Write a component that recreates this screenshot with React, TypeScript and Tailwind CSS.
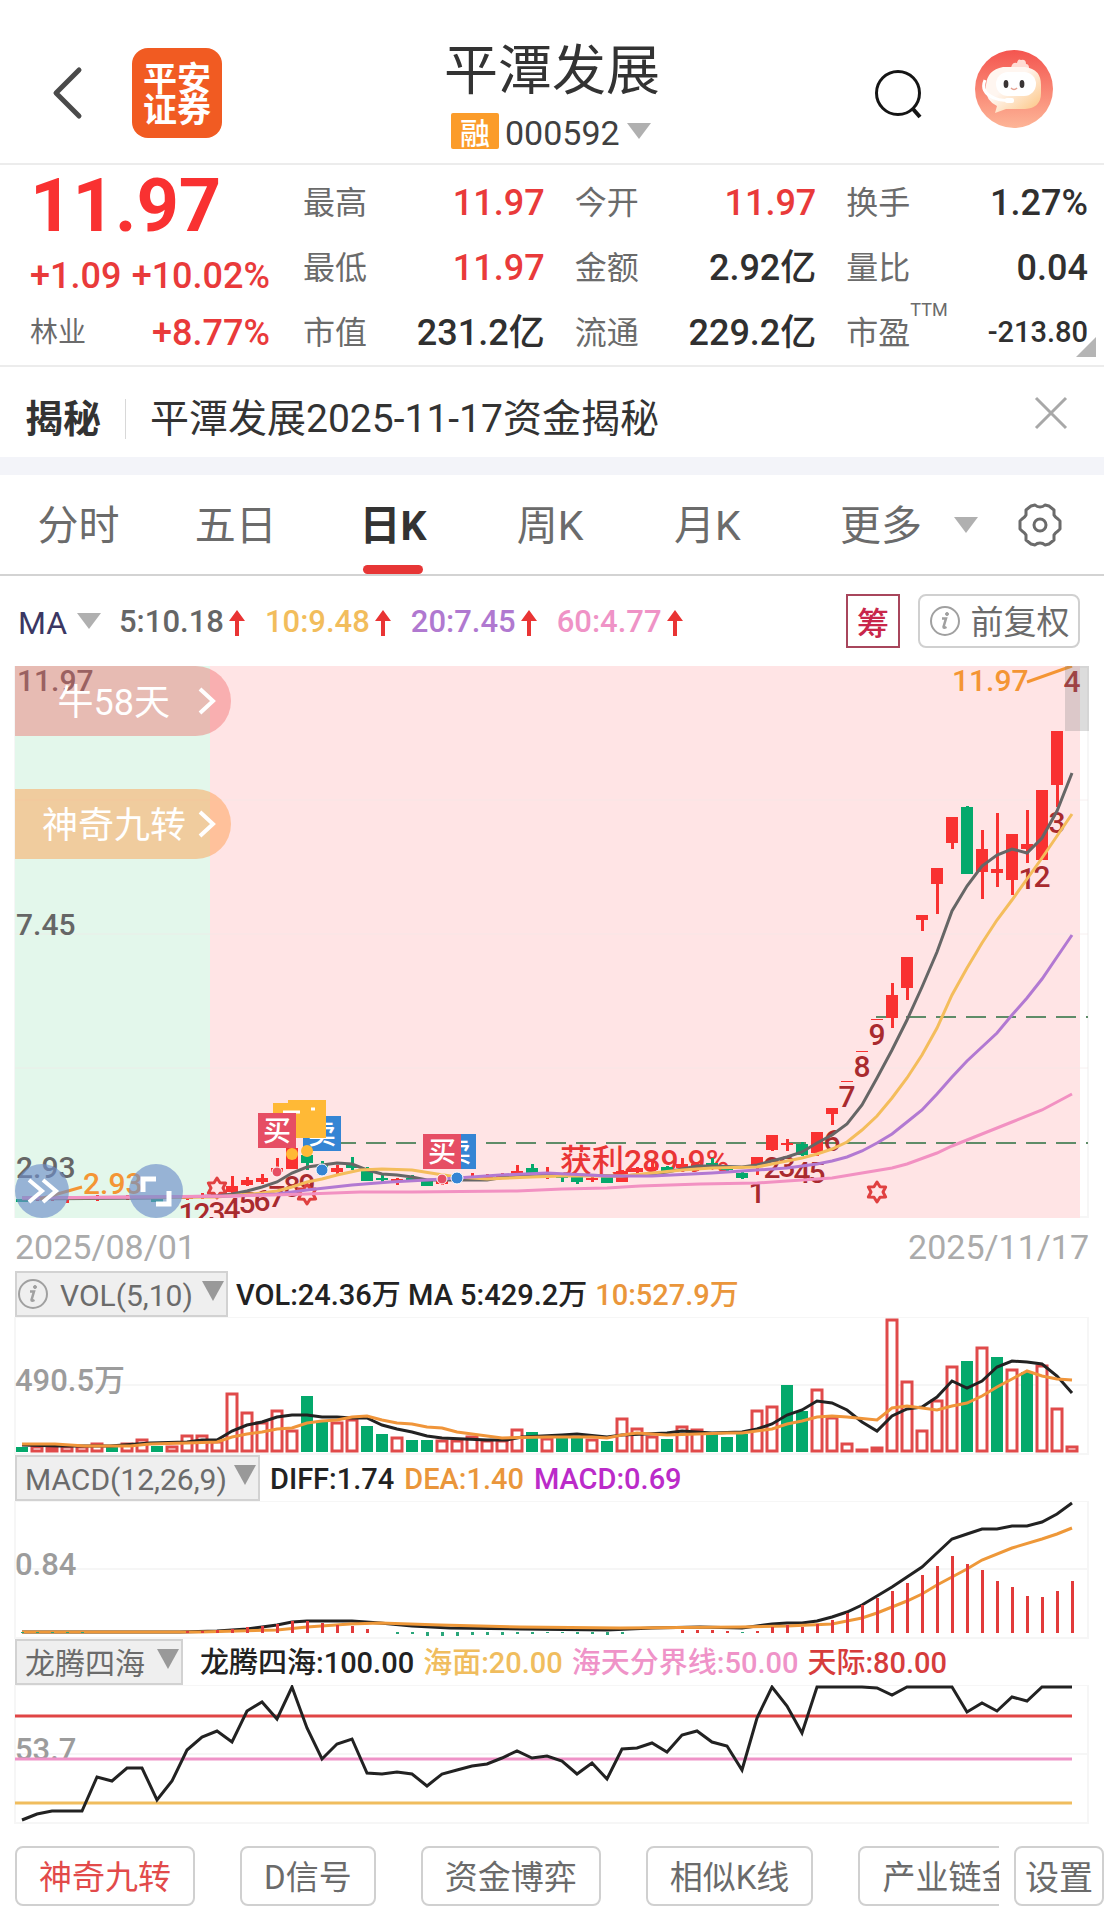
import { useState } from 'react';

const FIRST_X = 22;
const STEP = 15;
const RED = '#f93131';
const GREEN = '#04a96c';

const xAt = (i: number) => FIRST_X + i * STEP;

// [index, body top, body bottom, wick top, wick bottom, colour]
type Candle = [number, number, number, number, number, 'r' | 'g'];

const candles: Candle[] = [
  [0, 1199, 1202, 1199, 1202, 'g'],
  [1, 1197, 1200, 1196, 1201, 'r'],
  [2, 1198, 1200, 1196, 1201, 'r'],
  [3, 1197, 1200, 1196, 1203, 'r'],
  [5, 1197, 1199, 1195, 1201, 'r'],
  [7, 1197, 1199, 1195, 1200, 'r'],
  [9, 1199, 1202, 1198, 1202, 'g'],
  [11, 1197, 1199, 1195, 1200, 'r'],
  [12, 1195, 1198, 1193, 1199, 'r'],
  [13, 1192, 1197, 1188, 1198, 'r'],
  [14, 1186, 1192, 1176, 1193, 'r'],
  [15, 1180, 1185, 1177, 1186, 'r'],
  [16, 1178, 1182, 1174, 1184, 'r'],
  [17, 1168, 1172, 1158, 1176, 'r'],
  [18, 1148, 1169, 1148, 1169, 'r'],
  [19, 1155, 1163, 1150, 1170, 'g'],
  [20, 1165, 1172, 1161, 1174, 'g'],
  [21, 1168, 1172, 1165, 1174, 'r'],
  [22, 1165, 1168, 1157, 1170, 'g'],
  [23, 1168, 1181, 1167, 1181, 'g'],
  [24, 1178, 1180, 1175, 1183, 'g'],
  [25, 1179, 1181, 1178, 1185, 'r'],
  [26, 1178, 1180, 1175, 1181, 'g'],
  [27, 1181, 1186, 1180, 1186, 'g'],
  [28, 1181, 1184, 1178, 1185, 'r'],
  [29, 1177, 1180, 1174, 1182, 'g'],
  [30, 1177, 1179, 1173, 1181, 'r'],
  [31, 1176, 1178, 1174, 1180, 'r'],
  [32, 1174, 1177, 1173, 1178, 'r'],
  [33, 1171, 1174, 1165, 1175, 'r'],
  [34, 1168, 1173, 1164, 1174, 'g'],
  [35, 1173, 1175, 1167, 1179, 'r'],
  [36, 1176, 1178, 1174, 1182, 'g'],
  [37, 1177, 1182, 1175, 1184, 'g'],
  [38, 1178, 1180, 1176, 1182, 'r'],
  [39, 1177, 1183, 1176, 1183, 'g'],
  [40, 1171, 1182, 1170, 1182, 'r'],
  [41, 1168, 1172, 1167, 1176, 'r'],
  [42, 1167, 1170, 1161, 1171, 'r'],
  [43, 1167, 1172, 1166, 1172, 'g'],
  [44, 1164, 1168, 1158, 1169, 'r'],
  [45, 1164, 1170, 1162, 1171, 'r'],
  [46, 1163, 1167, 1158, 1168, 'g'],
  [47, 1167, 1170, 1166, 1172, 'g'],
  [48, 1173, 1178, 1172, 1179, 'g'],
  [49, 1157, 1165, 1157, 1175, 'r'],
  [50, 1135, 1150, 1135, 1151, 'r'],
  [51, 1143, 1145, 1139, 1151, 'r'],
  [52, 1144, 1155, 1142, 1156, 'g'],
  [53, 1132, 1153, 1132, 1156, 'r'],
  [54, 1108, 1114, 1108, 1125, 'r'],
  [55, 1081, 1082, 1081, 1082, 'r'],
  [56, 1051, 1052, 1051, 1052, 'r'],
  [57, 1019, 1020, 1019, 1020, 'r'],
  [58, 995, 1018, 983, 1028, 'r'],
  [59, 957, 988, 957, 1000, 'r'],
  [60, 915, 920, 915, 931, 'r'],
  [61, 868, 884, 868, 914, 'r'],
  [62, 817, 843, 817, 849, 'r'],
  [63, 807, 874, 806, 874, 'g'],
  [64, 849, 872, 830, 899, 'r'],
  [65, 869, 873, 813, 887, 'r'],
  [66, 834, 880, 834, 895, 'r'],
  [67, 844, 849, 810, 863, 'r'],
  [68, 790, 860, 790, 860, 'r'],
  [69, 731, 785, 731, 807, 'r'],
];

const priceLines = [
  {
    color: '#666666',
    points:
      '22,1199 150,1198 217,1196 232,1194 247,1191 262,1187 277,1182 292,1173 307,1167 322,1165 337,1163 352,1164 367,1170 382,1174 397,1175 412,1177 427,1180 457,1180 487,1180 517,1175 540,1174 577,1175 622,1176 652,1174 667,1172 682,1169 697,1166 712,1166 742,1167 757,1165 772,1161 787,1157 802,1152 817,1143 832,1135 847,1124 862,1105 877,1078 892,1050 907,1020 922,987 937,952 952,911 967,886 982,866 997,855 1012,849 1027,853 1042,838 1057,811 1072,773',
  },
  {
    color: '#f4bd5c',
    points:
      '22,1198 217,1197 262,1193 277,1191 292,1187 307,1182 322,1179 337,1175 360,1170 382,1169 412,1170 437,1174 457,1177 487,1179 532,1177 562,1176 622,1176 652,1173 682,1170 712,1168 757,1167 772,1164 787,1161 802,1158 817,1154 832,1149 847,1142 862,1130 877,1116 892,1098 907,1078 922,1055 937,1028 952,995 967,968 982,943 997,920 1012,900 1027,879 1042,858 1057,836 1072,814',
  },
  {
    color: '#b279d2',
    points:
      '22,1198 150,1197 232,1196 277,1194 307,1190 352,1185 390,1182 427,1180 457,1178 500,1175 547,1173 607,1176 652,1176 712,1173 757,1170 787,1168 802,1166 817,1164 832,1161 847,1157 862,1151 877,1143 892,1134 907,1122 922,1110 937,1094 952,1077 967,1061 982,1047 997,1033 1012,1015 1027,998 1042,979 1057,957 1072,935',
  },
  {
    color: '#f291c2',
    points:
      '22,1198 232,1196 307,1194 360,1192 412,1192 517,1191 562,1189 607,1188 640,1186 700,1184 757,1183 787,1181 832,1178 862,1173 892,1168 907,1164 937,1153 952,1146 982,1134 1012,1122 1042,1110 1057,1102 1072,1094',
  },
];

// [digit, x, baseline]
const counts: [string, number, number][] = [
  ['1', 187, 1224], ['2', 202, 1224], ['3', 217, 1223], ['4', 232, 1219], ['5', 247, 1213],
  ['6', 262, 1211], ['7', 277, 1207], ['8', 292, 1197], ['9', 307, 1195],
  ['1', 757, 1203], ['2', 772, 1178], ['3', 787, 1177], ['4', 802, 1183], ['5', 817, 1183],
  ['6', 832, 1151], ['7', 847, 1107], ['8', 862, 1077], ['9', 877, 1045],
  ['1', 1027, 889], ['2', 1042, 887], ['3', 1057, 833], ['4', 1072, 692],
];

const volumeTops = [
  1447, 1446, 1447, 1446, 1446, 1443, 1447, 1443, 1439, 1446, 1446, 1435, 1435, 1441, 1393, 1412, 1422, 1410, 1430,
  1396, 1422, 1422, 1419, 1426, 1434, 1437, 1440, 1440, 1440, 1440, 1436, 1440, 1440, 1429, 1432, 1438, 1438, 1438,
  1439, 1441, 1418, 1428, 1436, 1439, 1426, 1429, 1434, 1437, 1434, 1410, 1406, 1385, 1411, 1389, 1417, 1443, 1449,
  1447, 1319, 1381, 1430, 1400, 1366, 1361, 1347, 1357, 1369, 1372, 1365, 1408, 1446,
];
const fallingDays = new Set([0, 6, 9, 19, 20, 23, 24, 26, 27, 34, 36, 37, 39, 43, 46, 47, 48, 51, 52, 63, 65, 67]);

const macdTops: Record<number, number> = {
  11: 1631, 12: 1631, 13: 1630, 14: 1629, 15: 1627, 16: 1626, 17: 1624, 18: 1621, 19: 1621, 20: 1623, 21: 1625,
  22: 1626, 23: 1629, 44: 1630, 45: 1630, 46: 1630, 47: 1631, 49: 1631, 50: 1627, 51: 1625, 52: 1627, 53: 1624,
  54: 1620, 55: 1613, 56: 1605, 57: 1598, 58: 1591, 59: 1583, 60: 1575, 61: 1566, 62: 1556, 63: 1564, 64: 1570,
  65: 1581, 66: 1587, 67: 1596, 68: 1597, 69: 1591, 70: 1581,
};
const macdBottoms: Record<number, number> = {
  0: 1633, 1: 1633, 2: 1633, 3: 1633, 4: 1633, 25: 1634, 26: 1634, 27: 1636, 28: 1636, 29: 1636, 30: 1635, 31: 1635,
  32: 1635, 33: 1634, 34: 1634, 35: 1633, 36: 1633, 37: 1634, 38: 1634, 39: 1635, 40: 1634, 48: 1633,
};

const seaLine = [
  1820, 1814, 1811, 1811, 1811, 1777, 1781, 1768, 1768, 1800, 1781, 1750, 1737, 1731, 1742, 1711, 1702, 1719, 1687,
  1728, 1759, 1744, 1739, 1773, 1774, 1772, 1774, 1786, 1774, 1770, 1766, 1764, 1758, 1751, 1758, 1756, 1761, 1774,
  1763, 1779, 1749, 1748, 1743, 1752, 1735, 1731, 1742, 1746, 1770, 1718, 1687, 1706, 1733, 1687, 1687, 1687, 1687,
  1688, 1695, 1687, 1687, 1687, 1687, 1712, 1703, 1711, 1697, 1701, 1687, 1687, 1687,
];

function Triangle({ className = '' }: { className?: string }) {
  return (
    <svg viewBox="0 0 24 16" className={`pointer-events-none h-4 w-6 shrink-0 ${className}`} aria-hidden="true">
      <path d="M0 0H24L12 16Z" fill="#b0b0b0" />
    </svg>
  );
}

function InfoIcon() {
  return (
    <svg viewBox="0 0 32 32" className="h-8 w-8 shrink-0" fill="none" stroke="#a0a0a0" aria-hidden="true">
      <circle cx="16" cy="16" r="14" strokeWidth="2" />
      <path d="M13 13.5h4l-2.5 8.5q0 1.5 3 0" strokeWidth="2.5" />
      <circle cx="18" cy="9" r="1.5" fill="#a0a0a0" />
    </svg>
  );
}

function IndicatorSelect({ name, className, info = false }: { name: string; className: string; info?: boolean }) {
  return (
    <label className="relative flex h-[46px] items-center border-2 border-[#d2d2d2] bg-[#efefef] font-normal">
      {info && (
        <span className="absolute left-0">
          <InfoIcon />
        </span>
      )}
      <select aria-label="指标" className={`h-full appearance-none text-[30px] text-[#6b6b6b] outline-none ${className}`}>
        <option>{name}</option>
      </select>
      <svg viewBox="0 0 22 20" className="pointer-events-none absolute top-2 right-[2px] h-5 w-[22px]" aria-hidden="true">
        <path d="M0 0H22L11 20Z" fill="#999" />
      </svg>
    </label>
  );
}

function Star({ x, y }: { x: number; y: number }) {
  const pts = Array.from({ length: 12 }, (_, k) => {
    const r = k % 2 ? 6 : 10;
    const a = (k * Math.PI) / 6 - Math.PI / 2;
    return `${x + r * Math.cos(a)},${y + r * Math.sin(a)}`;
  });
  return <polygon points={pts.join(' ')} fill="#ffe4e5" stroke="#e04040" strokeWidth="3" strokeLinejoin="round" />;
}

function Tag({ x, y, text, fill }: { x: number; y: number; text: string; fill: string }) {
  return (
    <g>
      <rect x={x} y={y} width="38" height="35" fill={fill} />
      <text x={x + 19} y={y + 28} textAnchor="middle" fontSize="28" fontWeight="500" fill="#fff">
        {text}
      </text>
    </g>
  );
}

function Frame({ top, bottom, lines }: { top: number; bottom: number; lines: number[] }) {
  return (
    <g stroke="#f6f6f6" strokeWidth="2" fill="none">
      <rect x="15" y={top} width="1073" height={bottom - top} />
      {lines.map((y) => (
        <path key={y} d={`M15 ${y}H1088`} />
      ))}
    </g>
  );
}

function PriceChart() {
  return (
    <svg viewBox="0 666 1104 552" className="block w-full">
      <Frame top={667} bottom={1217} lines={[]} />
      <rect x="15" y="666" width="195" height="552" fill="#e3f7eb" />
      <rect x="210" y="666" width="870" height="552" fill="#ffe4e5" />
      <path d="M15 800H1088M15 934H1088M15 1068H1088" stroke="#f3e8e8" opacity="0.6" />

      <g fontSize="30" fontWeight="500" fill="#666">
        <text x="17" y="691">11.97</text>
        <text x="16" y="935">7.45</text>
        <text x="16" y="1178">2.93</text>
      </g>
      <g stroke="#5f8c68" strokeWidth="2" strokeDasharray="20 10">
        <path d="M336 1143H1088" />
        <path d="M876 1017H1088" />
      </g>

      <text x="560" y="1172" fontSize="32" fontWeight="500" fill="#e93535">
        获利289.9%
      </text>

      <g fontSize="30" fontWeight="500" fill="#a92a2e" textAnchor="middle">
        {counts.map(([n, x, y]) => (
          <text key={`${x}-${y}`} x={x} y={y}>
            {n}
          </text>
        ))}
      </g>
      {candles.map(([i, top, bottom, high, low, c]) => (
        <g key={i} fill={c === 'r' ? RED : GREEN}>
          <rect x={xAt(i) - 6} y={top} width="12" height={bottom - top} />
          <rect x={xAt(i) - 1} y={high} width="3" height={low - high} />
        </g>
      ))}
      <Star x={217} y={1188} />
      <Star x={307} y={1194} />
      <Star x={877} y={1192} />
      {priceLines.map((line) => (
        <polyline key={line.color} points={line.points} fill="none" stroke={line.color} strokeWidth="3" />
      ))}

      {/* high and low callouts */}
      <g fill="#f49534" stroke="none" fontSize="30" fontWeight="500">
        <text x="952" y="691">11.97</text>
        <text x="83" y="1194">2.93</text>
      </g>
      <path d="M1027 682L1072 666M82 1187L40 1199" stroke="#f49534" strokeWidth="3" />
      <rect x="1065" y="666" width="24" height="65" fill="#808080" opacity="0.28" />

      {/* trade marks */}
      <rect x="273" y="1103" width="38" height="35" fill="#ffb936" />
      <Tag x={303} y={1116} text="卖" fill="#3585d4" />
      <rect x="288" y="1100" width="38" height="38" fill="#ffb936" />
      <path d="M283 1112H300M311 1109H315" stroke="#fff" strokeWidth="3" />
      <Tag x={258} y={1113} text="买" fill="#e64e64" />
      <Tag x={438} y={1134} text="卖" fill="#3585d4" />
      <Tag x={423} y={1134} text="买" fill="#e64e64" />
      <g stroke="#fff" strokeWidth="1">
        <circle cx="277" cy="1172" r="5" fill="#e64e64" />
        <circle cx="322" cy="1170" r="6" fill="#3585d4" />
        <circle cx="442" cy="1179" r="5" fill="#e64e64" />
        <circle cx="457" cy="1178" r="6" fill="#3585d4" />
      </g>
      <circle cx="292" cy="1154" r="6" fill="#ffb936" />
      <circle cx="307" cy="1151" r="6" fill="#ffb936" />
    </svg>
  );
}

function VolumeChart() {
  return (
    <svg viewBox="0 1317 1104 138" className="block w-full">
      <Frame top={1317} bottom={1454} lines={[1385]} />
      <text x="15" y="1391" fontSize="31" fontWeight="500" fill="#9c9c9c">
        490.5万
      </text>
      {volumeTops.map((top, i) =>
        fallingDays.has(i) ? (
          <rect key={i} x={xAt(i) - 6} y={top} width="12" height={1452 - top} fill={GREEN} />
        ) : (
          <rect
            key={i}
            x={xAt(i) - 5}
            y={top + 1}
            width="10"
            height={Math.max(1450 - top, 1)}
            fill="#fff"
            stroke="#e04a4a"
            strokeWidth="3"
          />
        ),
      )}
      <polyline
        fill="none"
        stroke="#222"
        strokeWidth="3"
        points="22,1445 60,1446 110,1446 150,1443 187,1442 202,1440 217,1440 232,1431 247,1425 262,1422 277,1417 292,1415 307,1415 322,1417 337,1417 352,1418 367,1418 382,1425 397,1429 412,1432 427,1436 442,1438 487,1440 507,1440 522,1437 562,1435 577,1434 607,1437 622,1435 667,1433 682,1431 712,1433 742,1432 757,1429 772,1424 787,1415 802,1410 817,1401 832,1403 847,1410 862,1422 877,1431 892,1416 907,1409 922,1407 937,1397 952,1381 967,1388 982,1381 997,1367 1012,1361 1027,1362 1042,1364 1057,1376 1072,1393"
      />
      <polyline
        fill="none"
        stroke="#f0953a"
        strokeWidth="3"
        points="22,1444 55,1444 85,1446 130,1446 150,1444 187,1443 217,1442 232,1437 247,1434 262,1432 277,1429 292,1428 307,1423 322,1421 337,1420 352,1417 367,1416 382,1420 397,1423 412,1424 427,1427 442,1428 457,1432 472,1434 502,1438 547,1437 592,1437 607,1438 622,1435 637,1433 667,1435 727,1433 742,1433 772,1429 787,1424 802,1421 817,1417 832,1416 847,1417 877,1420 892,1408 907,1406 922,1408 937,1410 952,1406 967,1403 982,1396 997,1387 1012,1379 1027,1371 1042,1376 1057,1379 1072,1380"
      />
    </svg>
  );
}

function MacdChart() {
  return (
    <svg viewBox="0 1501 1104 138" className="block w-full">
      <Frame top={1501} bottom={1638} lines={[1569]} />
      <text x="15" y="1575" fontSize="31" fontWeight="500" fill="#9c9c9c">
        0.84
      </text>
      <polyline
        fill="none"
        stroke="#222"
        strokeWidth="3"
        points="22,1632 180,1632 217,1631 232,1630 247,1629 262,1627 277,1625 292,1622 307,1621 352,1621 380,1623 412,1626 450,1628 520,1629 607,1630 652,1628 700,1627 742,1628 772,1624 787,1623 802,1623 817,1621 832,1617 847,1612 862,1605 877,1596 892,1587 907,1577 922,1567 937,1553 952,1539 967,1534 982,1529 997,1529 1012,1526 1027,1526 1042,1522 1057,1514 1072,1503"
      />
      <polyline
        fill="none"
        stroke="#ee9839"
        strokeWidth="3"
        points="22,1632 200,1632 277,1630 307,1627 350,1624 380,1623 440,1625 520,1627 620,1628 740,1627 787,1626 832,1624 862,1618 877,1613 892,1607 907,1601 922,1594 937,1585 952,1577 967,1569 982,1560 1012,1548 1042,1539 1057,1534 1072,1528"
      />
      {Object.entries(macdTops).map(([i, top]) => (
        <rect key={i} x={xAt(Number(i)) - 1} y={top} width="3" height={1633 - top} fill="#e23b3b" />
      ))}
      {Object.entries(macdBottoms).map(([i, bottom]) => (
        <rect key={i} x={xAt(Number(i)) - 1} y="1632" width="3" height={bottom - 1632} fill="#2aa67a" />
      ))}
    </svg>
  );
}

function SeaChart() {
  return (
    <svg viewBox="0 1685 1104 139" className="block w-full">
      <Frame top={1685} bottom={1823} lines={[1754]} />
      <text x="15" y="1760" fontSize="31" fontWeight="500" fill="#9c9c9c">
        53.7
      </text>
      <path d="M15 1716H1072" stroke="#e04545" strokeWidth="3" />
      <path d="M15 1759H1072" stroke="#ef93c8" strokeWidth="3" />
      <path d="M15 1803H1072" stroke="#f0bd5e" strokeWidth="3" />
      <polyline
        fill="none"
        stroke="#222"
        strokeWidth="3"
        points={seaLine.map((y, i) => `${xAt(i)},${y}`).join(' ')}
      />
    </svg>
  );
}

function Header() {
  return (
    <header className="grid grid-cols-[1fr_auto_1fr] items-center border-b-2 border-[#ececec] pt-[38px] pb-[14px]">
      <div className="flex items-center gap-12 pb-[2px] pl-[52px]">
        <button aria-label="返回">
          <svg viewBox="0 0 32 54" className="h-[54px] w-8" fill="none" stroke="#4a4a4a" strokeWidth="5" strokeLinecap="round" strokeLinejoin="round">
            <path d="M27 4L4 27L27 50" />
          </svg>
        </button>
        <div className="flex h-[90px] w-[90px] flex-col items-center justify-center rounded-2xl bg-[#f15b22] pt-1 text-[34px] leading-[31px] font-bold text-white">
          <span>平安</span>
          <span>证券</span>
        </div>
      </div>

      <div className="flex flex-col items-center gap-[11px]">
        <h1 className="pt-1 text-[54px] leading-[60px] text-[#333]">平潭发展</h1>
        <div className="flex h-9 items-center">
          <span className="flex h-9 w-12 items-center justify-center rounded-xs bg-[#fb9c2a] pt-1 text-[30px] font-medium text-white">融</span>
          <label className="relative ml-[6px] flex items-center">
            <select aria-label="股票代码" className="w-[148px] appearance-none pt-1 text-[34px] leading-9 text-[#404040] outline-none">
              <option>000592</option>
            </select>
            <Triangle className="absolute right-[2px]" />
          </label>
        </div>
      </div>

      <div className="flex items-center justify-end gap-[52px] pr-[51px]">
        <button aria-label="搜索">
          <svg viewBox="0 0 48 52" className="h-[52px] w-12" fill="none" stroke="#151515" strokeWidth="3">
            <circle cx="23" cy="25" r="21.5" />
            <path d="M38 41L45 49" strokeWidth="4" />
          </svg>
        </button>
        <button aria-label="智能客服" className="mb-[10px]">
          <svg viewBox="0 0 78 78" className="h-[78px] w-[78px]">
            <defs>
              <linearGradient id="bot-bg" x1="0" y1="0" x2="0" y2="1">
                <stop offset="0" stopColor="#f4554f" />
                <stop offset="1" stopColor="#fdb597" />
              </linearGradient>
              <linearGradient id="bot-face" x1="0" y1="0" x2="1" y2="1">
                <stop offset="0.4" stopColor="#fff6f0" />
                <stop offset="1" stopColor="#fcc27c" />
              </linearGradient>
            </defs>
            <circle cx="39" cy="39" r="39" fill="url(#bot-bg)" />
            <path d="M36 18q1-6 6-5q1-5 4-3q5-1 5 4q3 0 3 4z" fill="#ffdcd4" />
            <path d="M28 17H50Q66 19 66 35V43Q66 58 50 59H31L20 63L22 56Q9 50 11 35Q12 20 28 17Z" fill="url(#bot-face)" />
            <rect x="21" y="22" width="40" height="24" rx="12" fill="#fff" />
            <path d="M10 30Q5 42 19 48Q25 51 33 50" fill="none" stroke="#fff" strokeWidth="3" />
            <rect x="30" y="48" width="9" height="5" rx="2" fill="#fff" />
            <ellipse cx="31" cy="34" rx="2.4" ry="4" fill="#3a3535" />
            <ellipse cx="47" cy="34" rx="2.4" ry="4" fill="#3a3535" />
            <path d="M36 38q3 3 6 0" fill="none" stroke="#e5a090" strokeWidth="1.5" />
          </svg>
        </button>
      </div>
    </header>
  );
}

const quotes = [
  { label: '最高', value: '11.97', up: true },
  { label: '今开', value: '11.97', up: true },
  { label: '换手', value: '1.27%' },
  { label: '最低', value: '11.97', up: true },
  { label: '金额', value: '2.92亿' },
  { label: '量比', value: '0.04' },
  { label: '市值', value: '231.2亿' },
  { label: '流通', value: '229.2亿' },
  { label: '市盈', value: '-213.80', note: 'TTM' },
];

function Quote() {
  return (
    <section className="relative flex gap-[33px] border-b-2 border-[#ececec] pt-[5px] pr-4 pl-[30px]">
      <div className="w-[240px] font-medium text-[#e93a3a]">
        <div className="text-[74px] leading-[72px] font-bold text-[#f93131]">11.97</div>
        <div className="flex h-[68px] items-center justify-between text-4xl">
          <span>+1.09</span>
          <span>+10.02%</span>
        </div>
        <div className="flex h-[45px] items-center justify-between text-4xl">
          <span className="text-[28px] font-normal text-[#6b6b6b]">林业</span>
          <span>+8.77%</span>
        </div>
      </div>
      <dl className="grid flex-1 grid-cols-3 gap-x-[30px]">
        {quotes.map((q) => (
          <div key={q.label} className="flex h-[65px] items-center justify-between">
            <dt className="relative text-[32px] text-[#6b6b6b]">
              {q.label}
              {q.note && <sup className="absolute -top-2 left-full text-lg leading-none">{q.note}</sup>}
            </dt>
            <dd className={`font-medium ${q.note ? 'text-[29px]' : 'text-4xl'} ${q.up ? 'text-[#e93a3a]' : 'text-[#303030]'}`}>
              {q.value}
            </dd>
          </div>
        ))}
      </dl>
      <svg viewBox="0 0 20 20" className="absolute right-2 bottom-2 h-5 w-5" aria-hidden="true">
        <path d="M20 0V20H0Z" fill="#b5b5b5" />
      </svg>
    </section>
  );
}

function News() {
  return (
    <section className="flex h-[90px] items-center pt-[14px] pr-[36px] pl-[25px] text-[38px] text-[#333]">
      <strong>揭秘</strong>
      <span className="ml-6 h-10 w-px bg-[#d8d8d8]" />
      <a href="#news" className="ml-6 text-[39px]">
        平潭发展2025-11-17资金揭秘
      </a>
      <button aria-label="关闭" className="mb-3 ml-auto">
        <svg viewBox="0 0 34 34" className="h-[34px] w-[34px]" stroke="#a8a8a8" strokeWidth="3">
          <path d="M2 2L32 32M32 2L2 32" />
        </svg>
      </button>
    </section>
  );
}

const periods = ['分时', '五日', '日K', '周K', '月K'];

function PeriodTabs() {
  const [period, setPeriod] = useState('日K');
  return (
    <nav className="flex h-[101px] items-stretch border-b-2 border-[#d3d3d3]">
      <div className="grid w-[786px] shrink grid-cols-5 text-[41px]">
        {periods.map((p) => (
          <button
            key={p}
            onClick={() => setPeriod(p)}
            className={`relative pt-1 ${p === period ? 'font-bold text-[#333]' : 'text-[#6b6b6b]'}`}
          >
            {p}
            {p === period && <span className="absolute bottom-0 left-1/2 h-[9px] w-[60px] -translate-x-1/2 rounded-full bg-[#e73636]" />}
          </button>
        ))}
      </div>
      <div className="flex flex-1 items-center justify-end pr-[42px]">
        <label className="relative flex items-center">
          <select aria-label="更多周期" className="w-[138px] appearance-none pt-[2px] text-[41px] leading-[60px] text-[#6b6b6b] outline-none">
            <option>更多</option>
          </select>
          <Triangle className="absolute right-0" />
        </label>
        <button aria-label="图表设置" className="ml-10">
          <svg viewBox="0 0 44 44" className="h-11 w-11" fill="none" stroke="#6b6b6b" strokeWidth="3" strokeLinejoin="round">
            <path d="M13 3L17 2Q19 4 22 4Q25 4 27 2L31 3L36 7L36 12Q37 14 40 16L42 18V26L40 28Q37 30 36 32L36 37L31 41L27 42Q25 40 22 40Q19 40 17 42L13 41L8 37L8 32Q7 30 4 28L2 26V18L4 16Q7 14 8 12L8 7Z" />
            <circle cx="22" cy="22" r="6" />
          </svg>
        </button>
      </div>
    </nav>
  );
}

const averages = [
  { text: '5:10.18', color: 'text-[#666]' },
  { text: '10:9.48', color: 'text-[#f2bd5c]' },
  { text: '20:7.45', color: 'text-[#b079d0]' },
  { text: '60:4.77', color: 'text-[#ef93c6]' },
];

function AverageBar() {
  return (
    <div className="flex h-[90px] items-center pr-6 pl-[18px] text-[31px]">
      <label className="relative flex items-center">
        <select aria-label="均线" className="w-[83px] appearance-none pt-[3px] text-[32px] text-[#3b3763] outline-none">
          <option>MA</option>
        </select>
        <Triangle className="absolute right-0" />
      </label>
      <div className="ml-[18px] flex gap-5 pt-[3px] font-medium">
        {averages.map((a) => (
          <span key={a.text} className={`flex items-center gap-[5px] ${a.color}`}>
            {a.text}
            <svg viewBox="0 0 16 26" className="h-[26px] w-4" aria-label="上升">
              <path d="M8 0L16 11H10V26H6V11H0Z" fill="#e93434" />
            </svg>
          </span>
        ))}
      </div>
      <button className="ml-auto h-[54px] w-[54px] border-2 border-[#a8465c] pt-1 text-[32px] font-medium text-[#c8264a]">筹</button>
      <button className="ml-[18px] flex h-[54px] w-[162px] items-center justify-center gap-[10px] rounded-lg border-2 border-[#d0d0d0] text-[33px] text-[#6b6b6b]">
        <InfoIcon />
        <span className="pt-1">前复权</span>
      </button>
    </div>
  );
}

function Pill({ children, className }: { children: string; className: string }) {
  return (
    <button className={`absolute left-[15px] flex h-[70px] w-[216px] items-center justify-end rounded-r-full pr-[15px] text-4xl text-white ${className}`}>
      <span className="pt-1">{children}</span>
      <svg viewBox="0 0 18 28" className="h-7 w-[18px]" fill="none" stroke="#fff" strokeWidth="4">
        <path d="M2 2L15 14L2 26" />
      </svg>
    </button>
  );
}

const shortcuts = [
  { text: '神奇九转', active: true },
  { text: 'D信号' },
  { text: '资金博弈' },
  { text: '相似K线' },
  { text: '产业链金' },
];

export default function App() {
  return (
    <main className="w-full overflow-hidden bg-white pb-5 font-['Roboto','Noto_Sans_CJK_SC',sans-serif]">
      <Header />
      <Quote />
      <News />
      <div className="h-[18px] bg-[#f3f4f9]" />
      <PeriodTabs />
      <AverageBar />

      <div className="relative">
        <PriceChart />
        <Pill className="top-0 gap-7 bg-[#f05a5a]/38">牛58天</Pill>
        <Pill className="top-[123px] gap-3 bg-[#ff9640]/45">神奇九转</Pill>
        <button aria-label="展开" className="absolute bottom-0 left-[15px] h-[54px] w-[54px] rounded-full bg-[#6e8fc9]/65">
          <svg viewBox="0 0 54 54" fill="none" stroke="#fff" strokeWidth="4">
            <path d="M14 16L27 27L14 38M28 16L41 27L28 38" />
          </svg>
        </button>
        <button aria-label="全屏" className="absolute bottom-0 left-[129px] h-[54px] w-[54px] rounded-full bg-[#6e8fc9]/65">
          <svg viewBox="0 0 54 54" fill="none" stroke="#fff" strokeWidth="5">
            <path d="M14 28V15H27M40 27V40H27" />
          </svg>
        </button>
      </div>
      <div className="flex h-[53px] items-center justify-between px-[15px] pt-[6px] text-[34px] text-[#ababab]">
        <span>2025/08/01</span>
        <span>2025/11/17</span>
      </div>

      <div className="flex h-[46px] items-center gap-2 pl-[15px] text-[29px] font-medium text-[#222]">
        <IndicatorSelect name="VOL(5,10)" info className="w-[209px] pl-[43px]" />
        <span className="pt-1">VOL:24.36万 MA 5:429.2万</span>
        <span className="pt-1 text-[#ea963b]">10:527.9万</span>
      </div>
      <VolumeChart />

      <div className="flex h-[46px] items-center gap-[10px] pl-[15px] text-[29px] font-medium text-[#222]">
        <IndicatorSelect name="MACD(12,26,9)" className="w-[241px] pl-2" />
        <span className="pt-1">DIFF:1.74</span>
        <span className="pt-1 text-[#ea963b]">DEA:1.40</span>
        <span className="pt-1 text-[#bb2bc9]">MACD:0.69</span>
      </div>
      <MacdChart />

      <div className="flex h-[46px] items-center gap-[9px] pl-[15px] text-[29px] font-medium text-[#222]">
        <IndicatorSelect name="龙腾四海" className="w-[164px] pl-2" />
        <span className="ml-2 pt-1">龙腾四海:100.00</span>
        <span className="pt-1 text-[#f0bd5e]">海面:20.00</span>
        <span className="pt-1 text-[#ef93c8]">海天分界线:50.00</span>
        <span className="pt-1 text-[#d63c3c]">天际:80.00</span>
      </div>
      <SeaChart />

      <footer className="mt-[22px] flex gap-[15px] pl-[15px] text-[33px] text-[#6b6b6b]">
        <div className="flex min-w-0 flex-1 gap-[45px] overflow-hidden">
          {shortcuts.map((s) => (
            <button
              key={s.text}
              className={`h-[60px] shrink-0 rounded-lg border-2 border-[#d0d0d0] px-[22px] pt-1 ${s.active ? 'text-[#e24a4a]' : ''}`}
            >
              {s.text}
            </button>
          ))}
        </div>
        <button className="h-[60px] w-[90px] shrink-0 rounded-lg border-2 border-[#d0d0d0] pt-1 text-[34px]">设置</button>
      </footer>
    </main>
  );
}
